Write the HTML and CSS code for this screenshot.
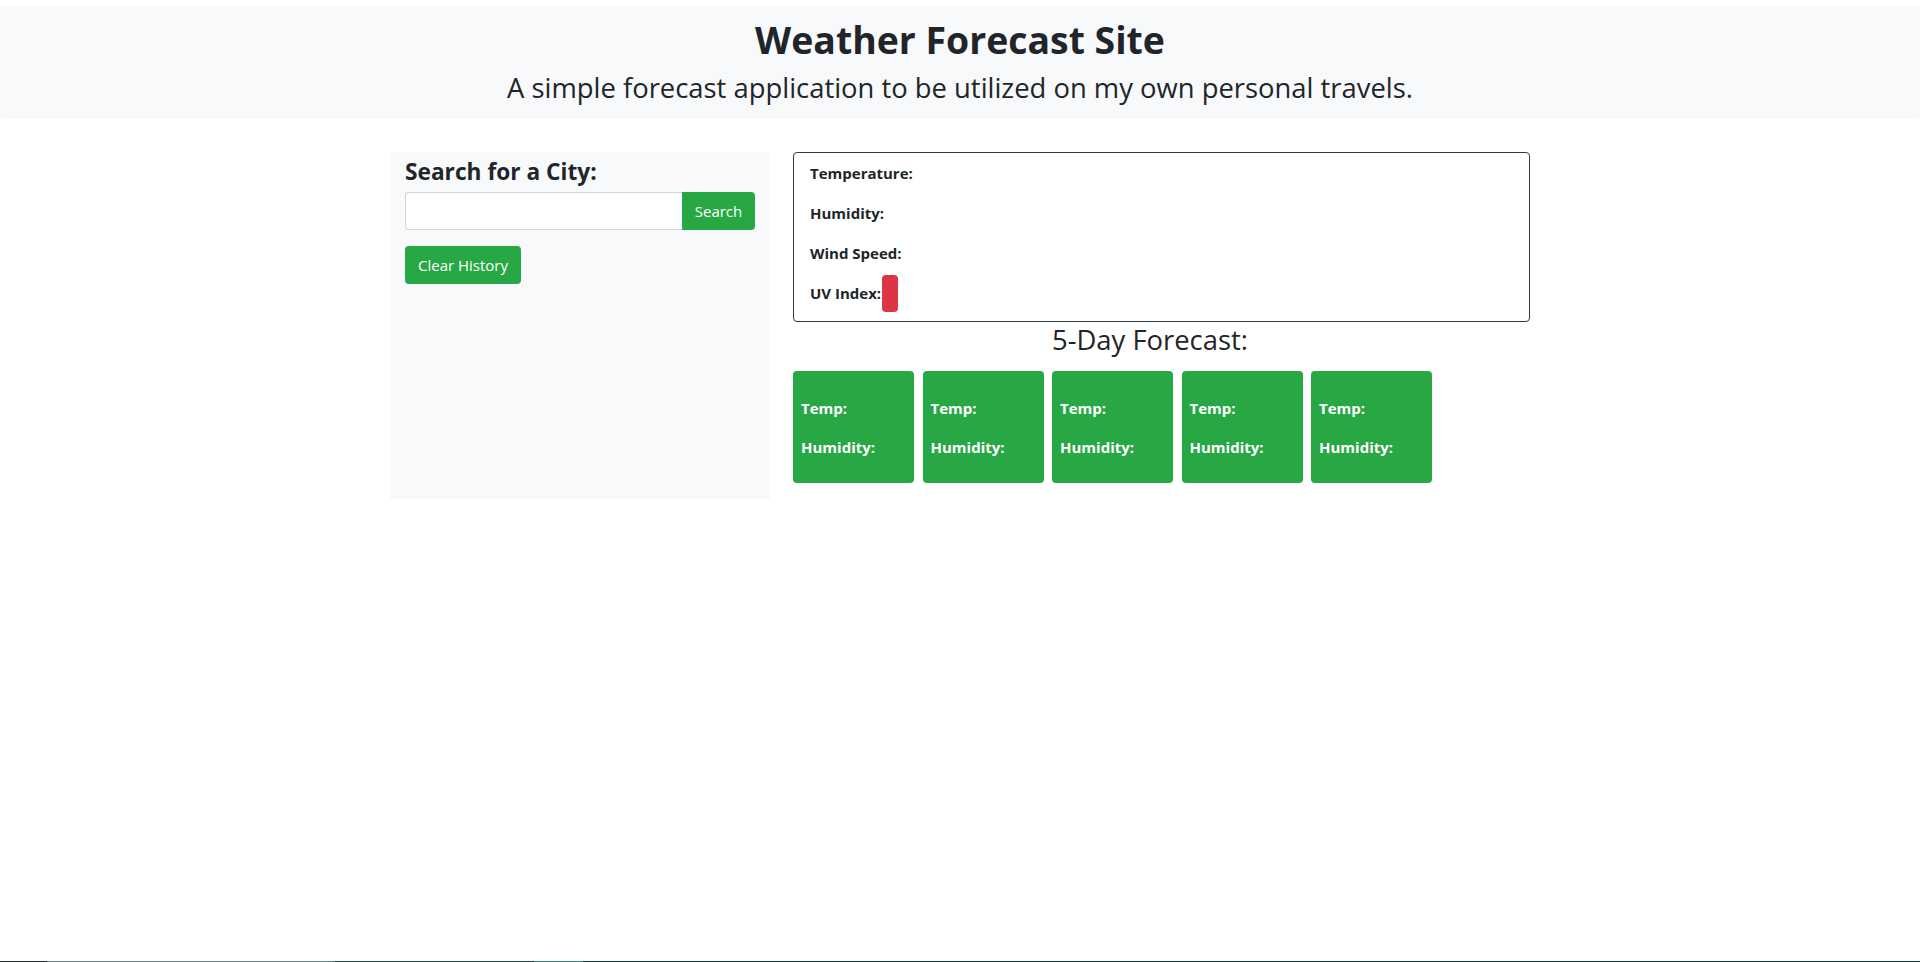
FILE: index.html
```html
<!DOCTYPE html>
<html lang="en">
<head>
<meta charset="utf-8">
<title>Weather Forecast Site</title>
<link rel="stylesheet" href="styles.css">
</head>
<body>
<div class="page">
  <header class="jumbo">
    <h1 class="jumbo-title">Weather Forecast Site</h1>
    <p class="jumbo-lead">A simple forecast application to be utilized on my own personal travels.</p>
  </header>

  <main class="container">
    <aside class="sidebar">
      <h4 class="side-title">Search for a City:</h4>
      <div class="input-group">
        <input class="city-input" type="text" aria-label="City">
        <button class="btn btn-search" type="button">Search</button>
      </div>
      <button class="btn btn-clear" type="button">Clear History</button>
    </aside>

    <section class="content">
      <div class="current-card">
        <p class="stat">Temperature:</p>
        <p class="stat">Humidity:</p>
        <p class="stat">Wind Speed:</p>
        <p class="stat stat-uv">UV Index:<span class="uv-badge"></span></p>
      </div>
      <h3 class="forecast-title">5-Day Forecast:</h3>
      <div class="forecast-row">
        <div class="day-card"><p class="stat">Temp:</p><p class="stat">Humidity:</p></div>
        <div class="day-card"><p class="stat">Temp:</p><p class="stat">Humidity:</p></div>
        <div class="day-card"><p class="stat">Temp:</p><p class="stat">Humidity:</p></div>
        <div class="day-card"><p class="stat">Temp:</p><p class="stat">Humidity:</p></div>
        <div class="day-card"><p class="stat">Temp:</p><p class="stat">Humidity:</p></div>
      </div>
    </section>
  </main>

  <div class="taskbar-edge"></div>
</div>
</body>
</html>
```

FILE: styles.css
```css
* { box-sizing: border-box; }

html, body {
  margin: 0;
  padding: 0;
  background: #ffffff;
}

body {
  font-family: "Open Sans", "Noto Sans", "Liberation Sans", sans-serif;
  color: #212529;
  font-size: 15px;
}

.page {
  min-height: 100vh;
  display: flex;
  flex-direction: column;
}

.jumbo {
  margin-top: 6px;
  background: #f8f9fa;
  border-radius: 5px;
  padding: 10px 0 14px;
  text-align: center;
}

.jumbo-title {
  margin: 0 0 7px;
  font-size: 37.4px;
  line-height: 48px;
  font-weight: 700;
}

.jumbo-lead {
  margin: 0;
  font-size: 27.4px;
  line-height: 34px;
  font-weight: 500;
}

.container {
  width: 1140px;
  margin: 33px auto 0;
  display: flex;
  align-items: stretch;
  gap: 23px;
}

.sidebar {
  width: 380px;
  flex: 0 0 380px;
  background: #f8f9fa;
  padding: 6px 15px 0;
}

.side-title {
  margin: 0 0 6px;
  font-size: 22.7px;
  line-height: 28px;
  font-weight: 700;
}

.input-group {
  display: flex;
  height: 38px;
}

.city-input {
  flex: 1;
  min-width: 0;
  height: 38px;
  border: 1px solid #ced4da;
  border-right: none;
  border-radius: 4px 0 0 4px;
  background: #fff;
  padding: 0 12px;
  font: inherit;
  outline: none;
}

.btn {
  height: 38px;
  border: none;
  background: #28a745;
  color: #fff;
  font-family: inherit;
  font-size: 15px;
  font-weight: 400;
  padding: 0 12px;
  cursor: pointer;
}

.btn-search {
  width: 73px;
  border-radius: 0 4px 4px 0;
}

.btn-clear {
  display: block;
  width: 116px;
  margin-top: 16px;
  border-radius: 4px;
}

.content {
  flex: 1;
  padding-bottom: 16px;
}

.current-card {
  border: 1px solid #343a40;
  border-radius: 4px;
  padding: 8px 16px 0;
}

.stat {
  margin: 0 0 16px;
  font-size: 15px;
  line-height: 24px;
  font-weight: 700;
}

.stat-uv {
  display: flex;
  align-items: center;
  height: 24px;
}

.uv-badge {
  display: block;
  width: 16px;
  height: 37px;
  margin-left: 1px;
  background: #dc3545;
  border-radius: 4px;
  flex: 0 0 auto;
}

.forecast-title {
  margin: 1px 23px 14px 0;
  text-align: center;
  font-size: 27.4px;
  line-height: 34px;
  font-weight: 500;
}

.forecast-row {
  display: flex;
  gap: 8.5px;
}

.day-card {
  width: 121px;
  background: #28a745;
  color: #fff;
  border-radius: 4px;
  padding: 25px 8px 9px;
}

.day-card .stat {
  margin-bottom: 15px;
}

.taskbar-edge {
  margin-top: auto;
  height: 1px;
  background: linear-gradient(to right,
    #1f2d2d 0, #1f2d2d 47px,
    #62888a 47px, #62888a 335px,
    #1d4643 335px, #1d4643 534px,
    #3c8c84 534px, #3c8c84 583px,
    #123b3b 583px, #123b3b 100%);
}
```
